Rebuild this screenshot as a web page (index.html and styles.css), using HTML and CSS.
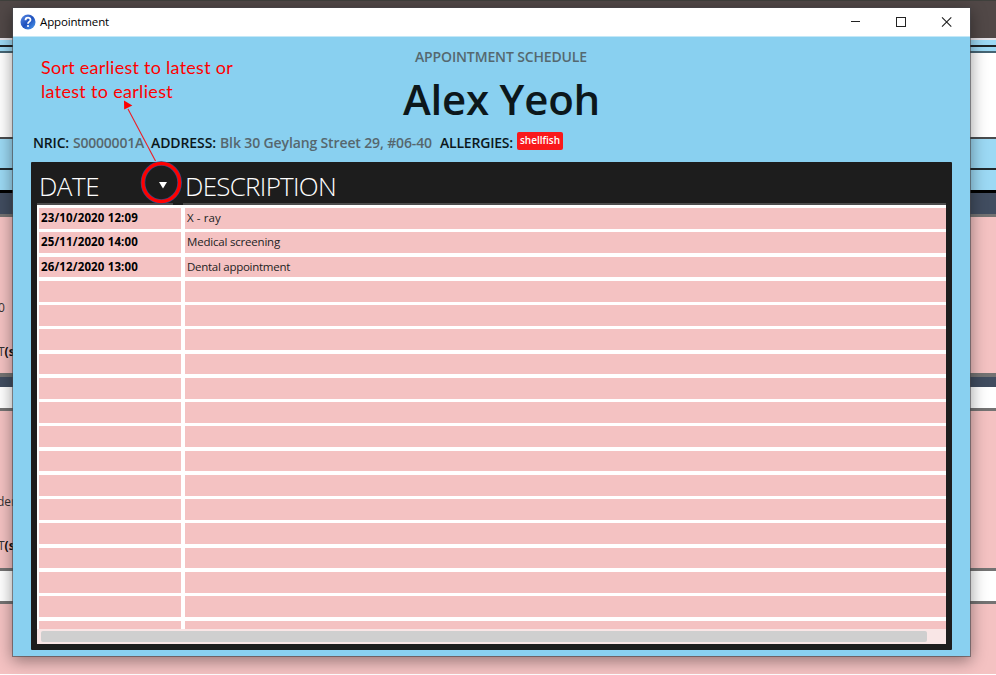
FILE: index.html
```html
<!DOCTYPE html>
<html lang="en">
<head>
<meta charset="utf-8">
<title>Appointment</title>
<link rel="stylesheet" href="styles.css">
</head>
<body>
<div class="desktop">
  <div class="backdrop" id="backdrop"></div>
  <span class="peek peek-a">0</span>
  <span class="peek peek-b">T<b>(s</b></span>
  <span class="peek peek-c">der</span>
  <span class="peek peek-d">T<b>(s</b></span>

  <section class="window">
    <header class="titlebar">
      <svg class="app-icon" width="16" height="16" viewBox="0 0 16 16">
        <defs><linearGradient id="g" x1="0" y1="0" x2="1" y2="1"><stop offset="0" stop-color="#5c8fe8"/><stop offset=".5" stop-color="#1f50bd"/><stop offset="1" stop-color="#4fa0f0"/></linearGradient></defs>
        <circle cx="8" cy="8" r="7.5" fill="url(#g)"/>
        <path d="M5.500 6.200C5.500 2.800 10.600 3 10.500 6C10.400 7.700 8 7.600 8 9.700" fill="none" stroke="#fff" stroke-width="1.8"/>
        <circle cx="8" cy="12" r="1.1" fill="#fff"/>
      </svg>
      <span class="title fit" data-w="69">Appointment</span>
      <svg class="controls" width="120" height="28" viewBox="0 0 120 28" fill="none" stroke="#222">
        <path d="M1 13.500H10"/><rect x="46.500" y="9.500" width="9" height="9"/><path d="M92 9.300L101.300 18.600M101.300 9.300L92 18.600" stroke-width="1.1"/>
      </svg>
    </header>
    <div class="heading"><span class="fit" data-w="172">APPOINTMENT SCHEDULE</span></div>
    <h1 class="name"><span class="fit" data-w="197">Alex Yeoh</span></h1>
    <div class="details">
      <b class="fit" data-w="36">NRIC:</b><span class="fit nric" data-w="71">S0000001A</span>
      <b class="fit address" data-w="65">ADDRESS:</b><span class="fit street" data-w="212">Blk 30 Geylang Street 29, #06-40</span>
      <b class="fit allergies" data-w="73">ALLERGIES:</b><span class="tag"><span class="fit" data-w="40">shellfish</span></span>
    </div>
    <div class="table">
      <div class="head">
        <div class="col-date"><span class="fit" data-w="60">DATE</span></div>
        <div class="col-desc"><span class="fit" data-w="151">DESCRIPTION</span></div>
      </div>
      <div class="rows" id="rows"></div>
      <div class="scroll"><div class="thumb"></div></div>
    </div>
  </section>

  <div class="note"><span class="fit" data-w="192">Sort earliest to latest or</span><br><span class="fit" data-w="132">latest to earliest</span></div>
  <svg class="marks" width="70" height="120" viewBox="0 0 70 120">
    <path d="M13 14L40.500 66" stroke="#ee1c25" stroke-width="1.1"/>
    <path d="M9 5.500L17.300 10.500L9.200 14.500Z" fill="#f00"/>
    <ellipse cx="46.300" cy="87.500" rx="18.300" ry="19" fill="none" stroke="#2f4b86" stroke-width="4.600"/>
    <ellipse cx="46.300" cy="87.500" rx="18.300" ry="19" fill="none" stroke="#f00" stroke-width="3.300"/>
    <path d="M44 87H52L48 93.500Z" fill="#fff"/>
  </svg>
</div>
<script src="app.js"></script>
</body>
</html>
```
FILE: styles.css
```css
* { box-sizing: border-box; }
body { margin: 0; background: #fff; font-family: "Noto Sans", "Open Sans", sans-serif; color: #000; }
.desktop { position: relative; width: 996px; height: 675px; overflow: hidden; }
.backdrop { display: flex; flex-direction: column; }
.fit { display: inline-block; white-space: nowrap; }
.peek { position: absolute; left: -2px; font: 12px/16px "Open Sans", sans-serif; color: #333; }
.peek b { color: #111; }
.peek-a { top: 300px; }
.peek-b { top: 344px; left: -2px; }
.peek-c { top: 494px; left: -3px; }
.peek-d { top: 538px; left: -2px; }

.window { position: absolute; left: 13px; top: 8px; width: 957px; height: 648px; background: #89d0f0; box-shadow: 0 0 0 1px rgba(70, 70, 75, .6), 0 4px 15px 1px rgba(0, 0, 0, .4); }
.titlebar { display: flex; align-items: center; height: 29px; padding-left: 7px; background: #fff; border-bottom: 1px solid #c4e8f7; }
.title { margin-left: 4px; font: 11.500px/28px "Open Sans", sans-serif; }
.controls { margin-left: auto; }
.heading { display: flex; padding: 10px 0 0 402px; height: 31px; font: 600 14px/19px "Open Sans", sans-serif; color: #55686f; }
.name { display: flex; margin: 0; padding: 6px 0 0 390px; height: 65px; font: 600 42px/50px "Open Sans", sans-serif; color: #0c171b; }
.details { display: flex; align-items: center; height: 20px; padding-left: 20px; font: 600 14px/20px "Open Sans", sans-serif; color: #56676e; }
.details b { font-weight: 600; color: #0c171b; }
.nric { margin-left: 4px; }
.details .address { margin-left: 7px; }
.street { margin-left: 4px; }
.details .allergies { margin-left: 8px; }
.tag { display: flex; margin-left: 4px; margin-top: -4px; width: 46px; height: 18px; padding-left: 3px; border-radius: 2px; background: #f9191b; color: #fff; font: 600 10px/17px "Open Sans", sans-serif; }

.table { display: flex; flex-direction: column; margin: 9px 18px 0; width: 921px; height: 488px; padding: 0 6px 6px; background: #1d1d1d; border-radius: 1px; }
.head { display: flex; flex: none; height: 43px; gap: 10px; color: #fff; font: 300 26px/48px "Open Sans", sans-serif; }
.col-date, .col-desc { display: flex; border-bottom: 2px solid #4c4c4c; }
.col-date { width: 136px; padding-left: 2px; }
.col-desc { flex: 1; padding-left: 2px; }
.rows { flex: none; height: 424px; padding: 3px 0 0 2px; background: #fff; overflow: hidden; }
.row { display: grid; grid-template-columns: 142px 1fr; gap: 4px; height: 24.270px; padding-bottom: 3.500px; font: 11.500px/20.600px "Open Sans", sans-serif; }
.cell { display: flex; height: 100%; padding-left: 2px; background: #f4c2c2; color: #222; }
.cell:first-child { font-weight: 700; color: #000; }
.scroll { height: 15px; padding: 2px 19px 2px 4px; background: #f9e6e6; }
.thumb { height: 11px; border-radius: 2px; background: #cfcfcf; }

.note { position: absolute; left: 41px; top: 55px; color: #f00; font: 18px/24px Lato, sans-serif; }
.marks { position: absolute; left: 115px; top: 95px; }
```
FILE: app.js
```js
const strips = [
  [1, '#3f403c'], [37, '#514847'], [2, '#e6e4e9'], [5, '#9cd9f4'], [2, '#1d2426'],
  [4, '#9cd9f4'], [2, '#466574'], [84, '#fff'], [2, '#4a4c4e'], [29, '#9cd9f4'],
  [2, '#22292c'], [20, '#9cd9f4'], [3, '#000'], [21, '#414d60'], [3, '#747373'],
  [156, '#f4c2c2'], [4, '#747373'], [10, '#414d60'], [21, '#fff'], [3, '#747373'],
  [157, '#f4c2c2'], [3, '#747373'], [30, '#fff'], [3, '#747373'], [70, '#f4c2c2']
];
const backdrop = document.getElementById('backdrop');
for (const [height, color] of strips) {
  const strip = document.createElement('div');
  strip.style.height = height + 'px';
  strip.style.background = color;
  backdrop.append(strip);
}

const appointments = [
  ['23/10/2020 12:09', 97, 'X - ray', 34],
  ['25/11/2020 14:00', 97, 'Medical screening', 93],
  ['26/12/2020 13:00', 97, 'Dental appointment', 103]
];
const rows = document.getElementById('rows');
for (let i = 0; i < 18; i++) {
  const row = document.createElement('div');
  row.className = 'row';
  const [date, dw, text, tw] = appointments[i] || ['', 0, '', 0];
  for (const [value, width] of [[date, dw], [text, tw]]) {
    const cell = document.createElement('div');
    cell.className = 'cell';
    if (value) {
      const label = document.createElement('span');
      label.className = 'fit';
      label.dataset.w = width;
      label.textContent = value;
      cell.append(label);
    }
    row.append(cell);
  }
  rows.append(row);
}

for (const label of document.querySelectorAll('.fit')) {
  const width = Number(label.dataset.w);
  const extra = (width - label.getBoundingClientRect().width) / label.textContent.length;
  label.style.letterSpacing = extra + 'px';
}
```
